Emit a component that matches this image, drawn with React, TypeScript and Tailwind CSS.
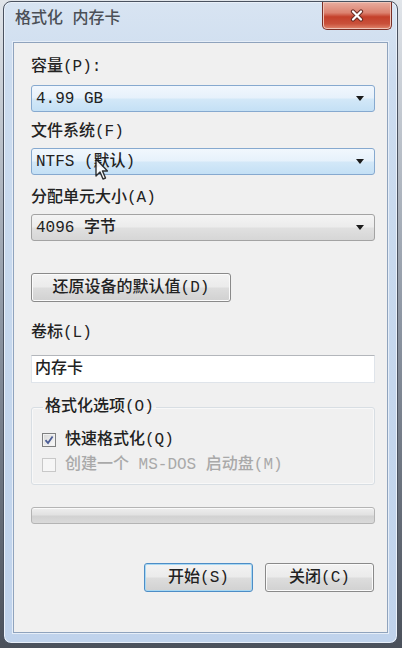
import clsx from 'clsx';

function Arrow() {
  return (
    <svg width="8" height="5" viewBox="0 0 8 5">
      <path d="M0 0 H8 L4 5 Z" fill="#1b1b1b" />
    </svg>
  );
}

function Combo({ value, hot }: { value: string; hot?: boolean }) {
  return (
    <div
      className={clsx(
        'flex h-[27px] items-center justify-between rounded-[3px] border pl-[4px] pr-[10px]',
        hot
          ? 'border-[#86a9cf] bg-[linear-gradient(#f1f7fd_0%,#e6f1fb_48%,#d3e8f8_52%,#c4e0f5_100%)]'
          : 'border-[#a3a3a3] bg-[linear-gradient(#f4f4f4_0%,#ececec_48%,#e0e0e0_52%,#d6d6d6_100%)]'
      )}
    >
      <span className="leading-[18px]">{value}</span>
      <Arrow />
    </div>
  );
}

function Button({ label, primary, className }: { label: string; primary?: boolean; className?: string }) {
  return (
    <div
      className={clsx(
        'flex h-[29px] items-center justify-center rounded-[3px] border bg-[linear-gradient(#f3f3f3_0%,#ebebeb_48%,#dddddd_52%,#d1d1d1_100%)]',
        primary ? 'border-[#4d8dc6] shadow-[inset_0_0_0_1px_#a8d8f3]' : 'border-[#8a8a8a] shadow-[inset_0_0_0_1px_#fbfbfb]',
        className
      )}
    >
      <span className="leading-[18px]">{label}</span>
    </div>
  );
}

function Checkbox({ label, checked, disabled }: { label: string; checked?: boolean; disabled?: boolean }) {
  return (
    <div className={clsx('flex h-[22px] items-center gap-[9px] pl-[10px]', disabled && 'text-[#a9a9a9]')}>
      <div
        className={clsx(
          'flex h-[14px] w-[14px] items-center justify-center border',
          disabled
            ? 'border-[#c8c8c8] bg-[#f6f6f6]'
            : 'border-[#7f8080] bg-[linear-gradient(135deg,#d6d6d6,#fbfbfb)] shadow-[inset_0_0_0_1px_#f2f2f2]'
        )}
      >
        {checked && (
          <svg width="10" height="10" viewBox="0 0 10 10">
            <path d="M1.5 5.2 L4 8 L8.6 1.4" fill="none" stroke="#4c5d95" strokeWidth="1.8" />
          </svg>
        )}
      </div>
      <span className="leading-[18px]">{label}</span>
    </div>
  );
}

function CloseGlyph() {
  return (
    <svg width="14" height="13" viewBox="0 0 14 13">
      <path d="M3 2.5 L11 10.5 M11 2.5 L3 10.5" stroke="#6a2b22" strokeWidth="4.2" strokeLinecap="round" />
      <path d="M3 2.5 L11 10.5 M11 2.5 L3 10.5" stroke="#ffffff" strokeWidth="2.2" strokeLinecap="round" />
    </svg>
  );
}

function Pointer() {
  return (
    <svg className="absolute left-[95px] top-[158px] opacity-90" width="13" height="22" viewBox="0 0 13 22">
      <path d="M1 1 V18 L5 14 L8 21 L10.5 20 L7.5 13 H12.5 Z" fill="#ffffff" stroke="#1e1e1e" strokeWidth="1.4" strokeLinejoin="round" />
    </svg>
  );
}

export default function App() {
  return (
    <div className="relative h-[648px] w-[402px] overflow-hidden bg-linear-to-b from-[#e1e5ea] via-[#8c95a2] to-[#4b515b] pl-[3px] pt-[1px] font-['Liberation_Mono','Noto_Sans_CJK_SC',monospace] text-[16px] font-medium text-[#222222]">
      <div className="flex h-[643px] w-[395px] flex-col rounded-[8px] border border-[#4a5260] bg-[linear-gradient(#d8e4f2_0%,#ccdcef_12%,#c5d7ed_60%,#c0d3ec_100%)] shadow-[inset_0_0_0_1px_#e9f0f9]">
        {/* title bar */}
        <div className="flex h-[40px] items-start">
          <span className="ml-[11px] mt-[7px] leading-[20px] text-[#4b4f56]">格式化 内存卡</span>
          <div className="ml-auto mr-[5px] flex h-[28px] w-[70px] items-center justify-center rounded-b-[5px] border border-t-0 border-[#7a2f26] bg-[linear-gradient(#e9ad9f_0%,#dc8270_40%,#c4402b_55%,#c9503a_80%,#e0866d_100%)] shadow-[inset_0_0_0_1px_#f0c4b8]">
            <CloseGlyph />
          </div>
        </div>

        {/* client area */}
        <div className="mx-[9px] flex h-[591px] flex-col border border-[#8fa3bd] bg-[#f0f0f0] pl-[17px] pr-[12px] shadow-[0_0_0_1px_#e6eef8]">
          <span className="mt-[15px] leading-[18px]">容量(P):</span>
          <div className="mt-[9px]">
            <Combo value="4.99 GB" hot />
          </div>

          <span className="mt-[11px] leading-[18px]">文件系统(F)</span>
          <div className="mt-[7px]">
            <Combo value="NTFS (默认)" hot />
          </div>

          <span className="mt-[14px] leading-[18px]">分配单元大小(A)</span>
          <div className="mt-[7px]">
            <Combo value="4096 字节" />
          </div>

          <Button label="还原设备的默认值(D)" className="mt-[32px] w-[200px]" />

          <span className="mt-[22px] leading-[18px]">卷标(L)</span>
          <div className="mt-[13px] flex h-[28px] items-center border border-[#dfe4ea] border-t-[#b3b6bb] bg-white pl-[3px]">
            <span className="leading-[18px]">内存卡</span>
          </div>

          <fieldset className="mt-[15px] h-[87px] rounded-[3px] border border-[#d8dee3] pb-[9px] shadow-[inset_0_0_0_1px_#f8f8f8]">
            <legend className="ml-[11px] px-[2px] leading-[18px]">格式化选项(O)</legend>
            <div className="mt-[13px] flex flex-col gap-[3px]">
              <Checkbox label="快速格式化(Q)" checked />
              <Checkbox label="创建一个 MS-DOS 启动盘(M)" disabled />
            </div>
          </fieldset>

          <div className="mt-[22px] h-[17px] rounded-[3px] border border-[#b4b4b4] bg-[linear-gradient(#eeeeee_0%,#e2e2e2_45%,#d2d2d2_55%,#dadada_100%)] shadow-[inset_0_1px_0_#fafafa]" />

          <div className="mt-[39px] flex justify-end gap-[12px] pr-[1px]">
            <Button label="开始(S)" primary className="w-[109px]" />
            <Button label="关闭(C)" className="w-[109px]" />
          </div>
        </div>
      </div>
      <Pointer />
    </div>
  );
}
